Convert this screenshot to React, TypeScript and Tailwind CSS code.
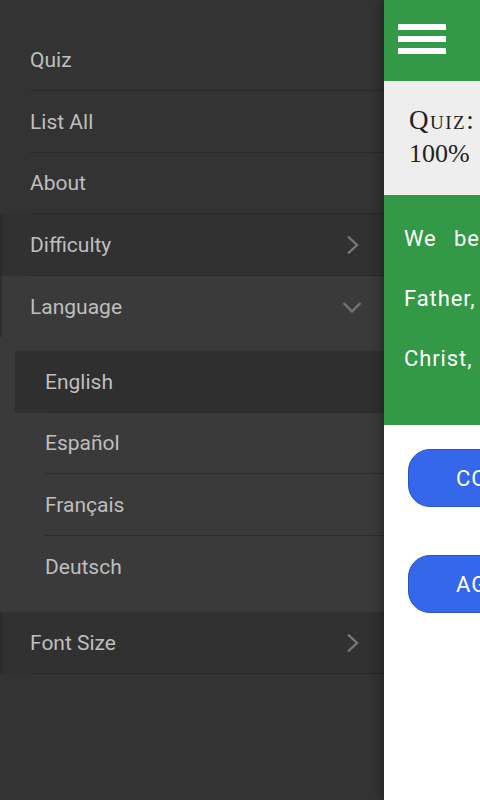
import React from "react";

function ChevronRight() {
  return (
    <svg width="14" height="20" viewBox="0 0 14 20" className="block">
      <polyline points="2,1.5 11,10 2,18.5" fill="none" stroke="#787878" strokeWidth="2.4" />
    </svg>
  );
}

function ChevronDown() {
  return (
    <svg width="20" height="12" viewBox="0 0 20 12" className="block">
      <polyline points="1.5,2 10,10.5 18.5,2" fill="none" stroke="#727272" strokeWidth="2.4" />
    </svg>
  );
}

function Row({ label, icon, strip }: { label: string; icon?: React.ReactNode; strip?: boolean }) {
  return (
    <div className={strip ? "border-l-2 border-[#2b2b2b] bg-[#313131] pl-[28px]" : "pl-[30px]"}>
      <div className="flex h-[61.5px] items-center justify-between border-b border-[#282828] pr-[24px] pt-[2px]">
        <span>{label}</span>
        {icon}
      </div>
    </div>
  );
}

function SubItem({ label, active, last }: { label: string; active?: boolean; last?: boolean }) {
  return (
    <div className={active ? "bg-[#2f2f2f]" : ""}>
      <div
        className={
          "ml-[30px] flex h-[61.5px] items-center pt-[2px] " + (last ? "" : "border-b border-[#2c2c2c]")
        }
      >
        {label}
      </div>
    </div>
  );
}

export default function App() {
  return (
    <div className="flex h-[800px] w-[480px] overflow-hidden bg-[#333333] font-['Roboto',sans-serif]">
      <nav className="w-[384px] shrink-0 bg-[#333333] pt-[29.5px] text-[21px] text-[#bebebe]">
        <Row label="Quiz" />
        <Row label="List All" />
        <Row label="About" />
        <Row label="Difficulty" strip icon={<ChevronRight />} />
        <div className="bg-[#3a3a3a]">
          <div className="border-l-2 border-[#2e2e2e] pl-[28px]">
            <div className="flex h-[61.5px] items-center justify-between pr-[22px] pt-[2px]">
              <span>Language</span>
              <ChevronDown />
            </div>
          </div>
          <div className="pb-[15px] pl-[15px] pt-[14px]">
            <SubItem label="English" active />
            <SubItem label="Español" />
            <SubItem label="Français" />
            <SubItem label="Deutsch" last />
          </div>
        </div>
        <Row label="Font Size" strip icon={<ChevronRight />} />
      </nav>
      <main className="relative z-10 w-[480px] shrink-0 bg-white shadow-[0_0_14px_rgba(0,0,0,0.45)]">
        <header className="h-[81px] bg-[#339947] pl-[14px] pt-[24px]">
          <div className="flex w-[48px] flex-col gap-[6px]">
            <div className="h-[6px] bg-white" />
            <div className="h-[6px] bg-white" />
            <div className="h-[6px] bg-white" />
          </div>
        </header>
        <section className="h-[114px] bg-[#eeeeee] pl-[25px] pt-[23px] font-['Liberation_Serif',serif] text-[#222222]">
          <div className="text-[27px] leading-[33px] tracking-[1.5px] [font-variant:small-caps]">Quiz:</div>
          <div className="text-[26px] leading-[33px]">100%</div>
        </section>
        <section className="h-[230px] bg-[#339947] pl-[20px] pr-[20px] pt-[14px] text-[22px] leading-[60px] tracking-[0.9px] text-white">
          <div className="whitespace-nowrap [word-spacing:11px]">We believe in one God, the</div>
          <div className="whitespace-nowrap [word-spacing:10px]">Father, the Almighty, maker of</div>
          <div className="whitespace-nowrap [word-spacing:10px]">Christ, the only Son of God,</div>
        </section>
        <div className="flex flex-col items-start gap-[48px] pl-[24px] pt-[24px]">
          <button className="flex h-[58px] items-center rounded-[22px] border border-[#2a52c0] bg-[#3467ea] px-[47px] text-[22px] tracking-[0.9px] text-white">
            CONTINUE
          </button>
          <button className="flex h-[58px] items-center rounded-[22px] border border-[#2a52c0] bg-[#3467ea] px-[47px] text-[22px] tracking-[0.9px] text-white">
            AGAIN
          </button>
        </div>
      </main>
    </div>
  );
}
